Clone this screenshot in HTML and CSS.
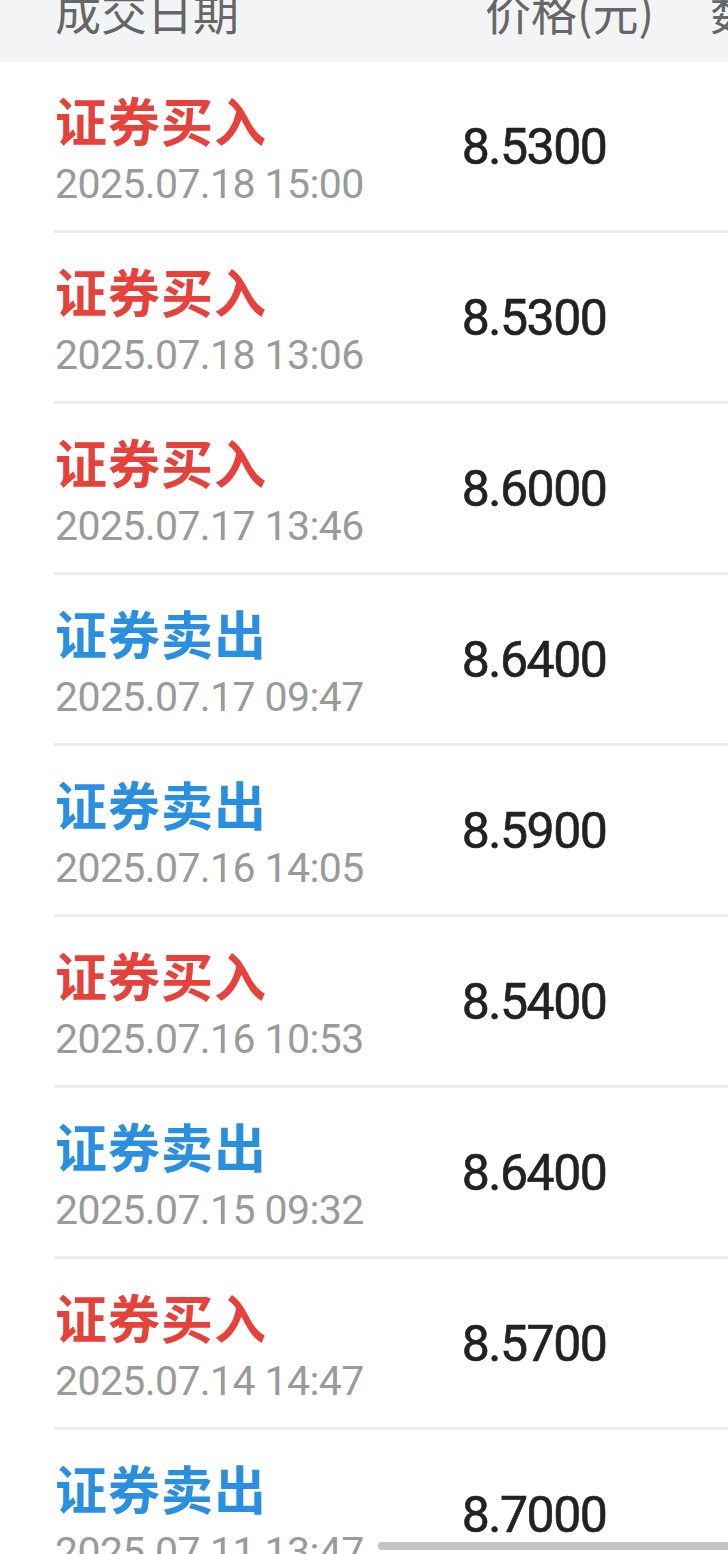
FILE: index.html
```html
<!DOCTYPE html>
<html lang="zh-CN">
<head>
    <meta charset="UTF-8">
    <title>成交记录</title>
    <link rel="stylesheet" href="styles.css">
</head>
<body>

<div class="header">
    <span class="h-date">成交日期</span>
    <span class="h-price">价格(元)</span>
    <span class="h-qty">数量</span>
</div>

<div class="list">
    <div class="row">
        <div class="info">
            <div class="title buy">证券买入</div>
            <div class="time">2025.07.18 15:00</div>
        </div>
        <div class="price">8.5300</div>
    </div>
    <div class="row">
        <div class="info">
            <div class="title buy">证券买入</div>
            <div class="time">2025.07.18 13:06</div>
        </div>
        <div class="price">8.5300</div>
    </div>
    <div class="row">
        <div class="info">
            <div class="title buy">证券买入</div>
            <div class="time">2025.07.17 13:46</div>
        </div>
        <div class="price">8.6000</div>
    </div>
    <div class="row">
        <div class="info">
            <div class="title sell">证券卖出</div>
            <div class="time">2025.07.17 09:47</div>
        </div>
        <div class="price">8.6400</div>
    </div>
    <div class="row">
        <div class="info">
            <div class="title sell">证券卖出</div>
            <div class="time">2025.07.16 14:05</div>
        </div>
        <div class="price">8.5900</div>
    </div>
    <div class="row">
        <div class="info">
            <div class="title buy">证券买入</div>
            <div class="time">2025.07.16 10:53</div>
        </div>
        <div class="price">8.5400</div>
    </div>
    <div class="row">
        <div class="info">
            <div class="title sell">证券卖出</div>
            <div class="time">2025.07.15 09:32</div>
        </div>
        <div class="price">8.6400</div>
    </div>
    <div class="row">
        <div class="info">
            <div class="title buy">证券买入</div>
            <div class="time">2025.07.14 14:47</div>
        </div>
        <div class="price">8.5700</div>
    </div>
    <div class="row">
        <div class="info">
            <div class="title sell">证券卖出</div>
            <div class="time">2025.07.11 13:47</div>
        </div>
        <div class="price">8.7000</div>
    </div>
</div>

<div class="scrollbar"></div>

</body>
</html>
```

FILE: styles.css
```css
html, body {
    margin: 0;
    padding: 0;
    background-color: #ffffff;
    font-family: "Noto Sans CJK SC", "Noto Sans", sans-serif;
}
body {
    height: 1554px;
    overflow: hidden;
    position: relative;
}
.header {
    display: flex;
    height: 62px;
    padding-left: 55px;
    background-color: #f3f4f6;
    overflow: hidden;
    white-space: nowrap;
}
.header span {
    flex-shrink: 0;
    font-size: 46px;
    line-height: 46px;
    margin-top: -13px;
    color: #666666;
}
.h-date {
    width: 430px;
}
.h-price {
    width: 225px;
}
.row {
    display: grid;
    grid-template-columns: 400px 160px 1fr;
    height: 168px;
    margin-left: 54px;
    border-bottom: 3px solid #ececec;
}
.info {
    display: flex;
    flex-direction: column;
    padding-top: 29px;
    padding-left: 1px;
}
.title {
    font-size: 52px;
    font-weight: bold;
    line-height: 58px;
    letter-spacing: 1px;
}
.buy {
    color: #e6413a;
}
.sell {
    color: #2b8fe0;
}
.time {
    margin-top: 11px;
    font-family: Roboto, "Liberation Sans", sans-serif;
    font-size: 41px;
    line-height: 48px;
    letter-spacing: -0.6px;
    color: #9a9a9a;
    white-space: nowrap;
}
.price {
    align-self: center;
    margin-top: 2px;
    font-family: Roboto, "Liberation Sans", sans-serif;
    font-size: 50px;
    font-weight: 400;
    letter-spacing: -1.5px;
    text-align: center;
    color: #222222;
    -webkit-text-stroke: 0.6px #222222;
}
.scrollbar {
    position: absolute;
    left: 378px;
    top: 1542px;
    width: 360px;
    height: 8px;
    border-radius: 4px;
    background-color: #c4c4c4;
}
```
